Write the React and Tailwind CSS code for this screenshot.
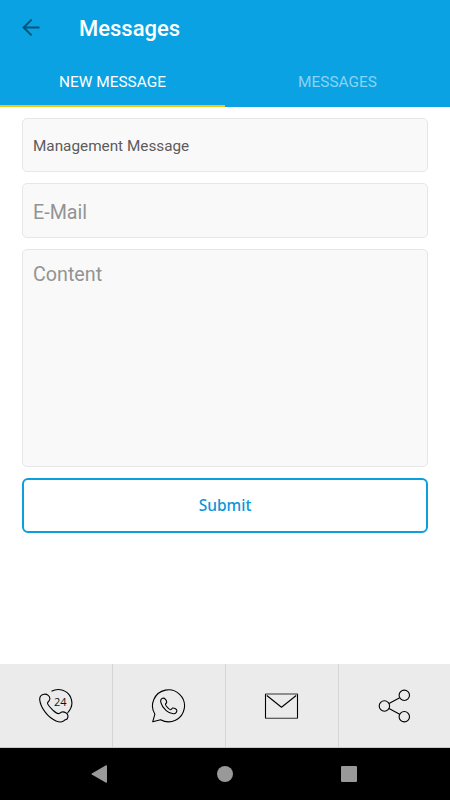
import { useState } from "react";

const iconProps = {
    width: 36,
    height: 36,
    viewBox: "0 0 36 36",
    fill: "none",
    stroke: "#000",
    strokeWidth: 1.1,
    strokeLinejoin: "round",
};

function CallIcon() {
    return (
        <svg {...iconProps}>
            <path d="M13.5 3.2C21 -0.6 29.5 2.6 32.6 9.2C35 14.6 33.6 20.6 29.5 25" />
            <path d="M6.3 6.2C3.4 6.5 1.6 8.6 1.7 11.6C2.1 16 4.2 20.2 7.2 24.2C10.2 28.2 14 31.2 18 32.9C22 34.6 24.6 34.4 26.4 32.4C27 31.6 28.8 32 29.5 30.2C30.4 28 30 26 27.8 24.8C25.4 23.4 23 24 21.6 25.3C20.2 26.4 18.6 25.6 15.3 22.5C12.6 19.8 9.2 16.6 9.5 15C9.8 13.4 11.7 13.4 11.9 10.8C11.9 8.2 9.2 5.9 6.3 6.2Z" />
            <text x="16" y="17.5" fontSize="11" fontWeight="400" fontFamily="Open Sans, sans-serif" fill="#111" stroke="none">24</text>
        </svg>
    );
}

function WhatsAppIcon() {
    return (
        <svg {...iconProps}>
            <path d="M3.9 26.2A16 16 0 1 1 9.6 31.7L1.7 33.8Z" />
            <path d="M11.6 10.2C9.8 10.8 9.4 12.6 9.9 14.6C10.6 17.6 12.6 20.3 15.2 22.6C17.8 24.8 20.6 25.9 22.8 25.7C24.8 25.5 26 24 25.8 22.3C25.6 20.8 22.6 19.6 21.6 20.1C20.6 20.6 20.6 21.8 19.6 21.8C18.2 21.6 14.8 18.2 14.5 16.5C14.4 15.4 15.6 15.2 15.7 14.2C15.7 12.6 13.8 9.6 11.6 10.2Z" />
        </svg>
    );
}

function MailIcon() {
    return (
        <svg {...iconProps}>
            <path d="M2.5 6V30.2M34.5 6V30.2" />
            <path d="M2.2 6H34.8M2.2 30.2H34.8" stroke="#333" />
            <path d="M3.8 7.5L18.5 19.3L33.2 7.5" />
        </svg>
    );
}

function ShareIcon() {
    return (
        <svg {...iconProps}>
            <circle cx="8.4" cy="18" r="5.2" />
            <circle cx="28.3" cy="7.3" r="5.2" />
            <circle cx="28.3" cy="28.7" r="5.2" />
            <path d="M13 15.5L23.7 9.8M13 20.5L23.7 26.2" />
        </svg>
    );
}

export default function App() {
    const [tab, setTab] = useState("new");
    const [form, setForm] = useState({ email: "", content: "" });

    return (
        <div className="flex h-[800px] w-[450px] flex-col overflow-hidden bg-white font-[Roboto,sans-serif]">

            {/* HEADER */}
            <header className="flex h-[107px] flex-col bg-[#0aa2e3]">
                <div className="flex h-[55px] items-center pl-[22px]">
                    <button aria-label="Back">
                        <svg width="18" height="18" viewBox="0 0 18 18" fill="none" stroke="#075476" strokeWidth="1.9">
                            <path d="M17.5 8.5H1.8M9.6 0.6L1.6 8.5L9.6 16.4" />
                        </svg>
                    </button>
                    <h1 className="ml-[39px] pt-[2px] text-[22px] leading-[28px] font-medium text-white">Messages</h1>
                </div>

                <div className="grid flex-1 grid-cols-2 text-[15.4px]">
                    <button
                        onClick={() => setTab("new")}
                        className={tab === "new" ? "border-b-2 border-[#f5c518] pt-[5px] text-white" : "border-b-2 border-transparent pt-[5px] text-[#8ad2f2]"}
                    >
                        NEW MESSAGE
                    </button>
                    <button
                        onClick={() => setTab("list")}
                        className={tab === "list" ? "border-b-2 border-[#f5c518] pt-[5px] text-white" : "border-b-2 border-transparent pt-[5px] text-[#8ad2f2]"}
                    >
                        MESSAGES
                    </button>
                </div>
            </header>

            {/* FORM */}
            <main className="flex flex-1 flex-col gap-[11px] px-[22px] pt-[11px]">
                <div className="flex h-[54px] items-center rounded-[5px] border border-[#e6e6e6] bg-[#f9f9f9] px-[10px] pt-[3px] text-[15.3px] text-[#5c5c5c]">
                    Management Message
                </div>
                <input
                    placeholder="E-Mail"
                    className="h-[55px] rounded-[5px] border border-[#e6e6e6] bg-[#f9f9f9] px-[10px] pt-[3px] text-[19.7px] placeholder:text-[#939393]"
                    value={form.email}
                    onChange={(e) => setForm({ ...form, email: e.target.value })}
                />
                <textarea
                    placeholder="Content"
                    className="h-[218px] resize-none rounded-[5px] border border-[#e6e6e6] bg-[#f9f9f9] px-[10px] pt-[10px] text-[19.7px] placeholder:text-[#939393]"
                    value={form.content}
                    onChange={(e) => setForm({ ...form, content: e.target.value })}
                />
                <button className="h-[55px] rounded-[6px] border-2 border-[#0a9fdf] pt-px text-[15.5px] font-medium text-[#0a96d9] font-[Noto_Sans,sans-serif]">
                    Submit
                </button>
            </main>

            {/* CONTACT BAR */}
            <div className="grid h-[84px] grid-cols-[113px_113px_113px_111px] border-b border-[#c8c8c8] bg-[#ebebeb]">
                <button aria-label="Call" className="flex items-center justify-center border-r border-[#d5d5d5]"><CallIcon /></button>
                <button aria-label="WhatsApp" className="flex items-center justify-center border-r border-[#d5d5d5]"><WhatsAppIcon /></button>
                <button aria-label="Mail" className="flex items-center justify-center border-r border-[#d5d5d5] pr-[2px]"><MailIcon /></button>
                <button aria-label="Share" className="flex items-center justify-center pr-px"><ShareIcon /></button>
            </div>

            {/* SYSTEM NAVIGATION */}
            <nav className="flex h-[52px] items-center bg-black pl-[91px]">
                <svg width="16" height="18" viewBox="0 0 16 18" fill="#999">
                    <path d="M15 0.3Q16 0 16 1V17Q16 18 15 17.7L0.8 9.6Q0 9 0.8 8.4Z" />
                </svg>
                <div className="ml-[110px] size-[16px] rounded-full bg-[#999]" />
                <div className="ml-[108px] size-[16px] rounded-[1px] bg-[#999]" />
            </nav>

        </div>
    );
}
